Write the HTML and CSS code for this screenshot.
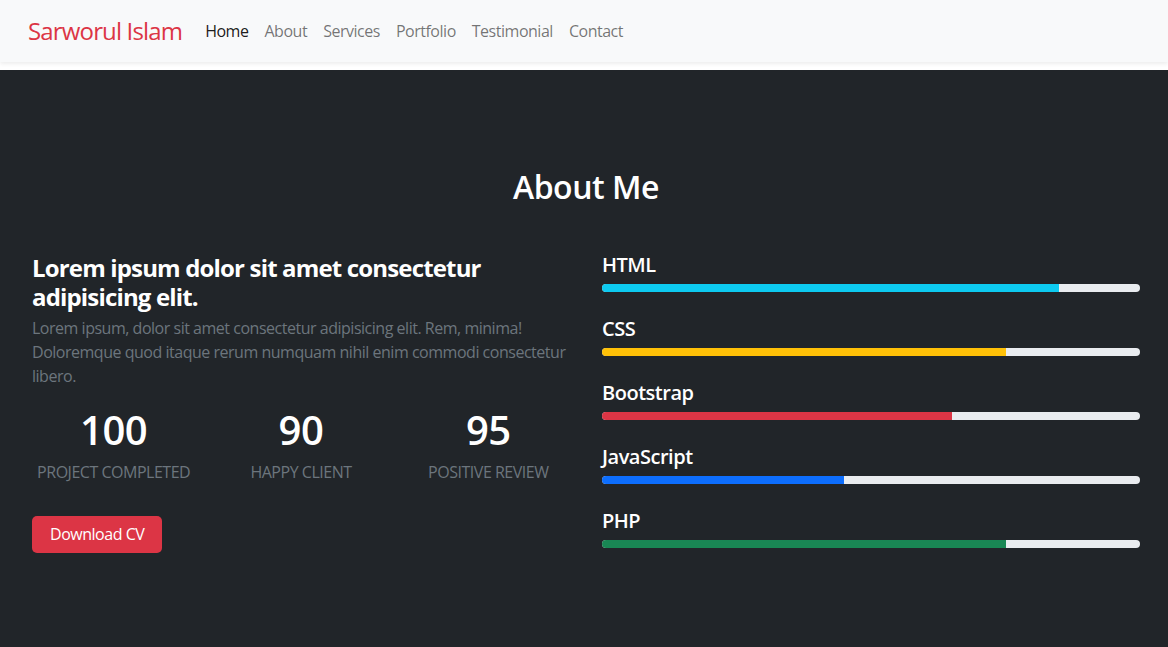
FILE: index.html
```html
<!DOCTYPE html>
<html lang="en">
<head>
<meta charset="utf-8">
<title>Sarworul Islam</title>
<link rel="stylesheet" href="styles.css">
</head>
<body>
<nav class="navbar">
  <a class="brand" href="#">Sarworul Islam</a>
  <ul class="nav">
    <li><a class="nav-link active" href="#">Home</a></li>
    <li><a class="nav-link" href="#">About</a></li>
    <li><a class="nav-link" href="#">Services</a></li>
    <li><a class="nav-link" href="#">Portfolio</a></li>
    <li><a class="nav-link" href="#">Testimonial</a></li>
    <li><a class="nav-link" href="#">Contact</a></li>
  </ul>
</nav>
<section class="about">
  <h2 class="section-title">About Me</h2>
  <div class="about-row">
    <div class="about-left">
      <h4 class="lead-title">Lorem ipsum dolor sit amet consectetur adipisicing elit.</h4>
      <p class="muted-text">Lorem ipsum, dolor sit amet consectetur adipisicing elit. Rem, minima! Doloremque quod itaque rerum numquam nihil enim commodi consectetur libero.</p>
      <div class="stats">
        <div class="stat"><div class="stat-num">100</div><div class="stat-label">Project Completed</div></div>
        <div class="stat"><div class="stat-num">90</div><div class="stat-label">Happy Client</div></div>
        <div class="stat"><div class="stat-num">95</div><div class="stat-label">Positive Review</div></div>
      </div>
      <a class="btn-cv" href="#">Download CV</a>
    </div>
    <div class="about-right">
      <div class="skill">
        <div class="skill-name">HTML</div>
        <div class="track"><div class="bar bar-info" style="width:85%"></div></div>
      </div>
      <div class="skill">
        <div class="skill-name">CSS</div>
        <div class="track"><div class="bar bar-warning" style="width:75%"></div></div>
      </div>
      <div class="skill">
        <div class="skill-name">Bootstrap</div>
        <div class="track"><div class="bar bar-danger" style="width:65%"></div></div>
      </div>
      <div class="skill">
        <div class="skill-name">JavaScript</div>
        <div class="track"><div class="bar bar-primary" style="width:45%"></div></div>
      </div>
      <div class="skill">
        <div class="skill-name">PHP</div>
        <div class="track"><div class="bar bar-success" style="width:75%"></div></div>
      </div>
    </div>
  </div>
</section>
</body>
</html>
```

FILE: styles.css
```css
* { box-sizing: border-box; }
html, body { margin: 0; padding: 0; }
body {
  font-family: "Open Sans", "Noto Sans", sans-serif;
  font-size: 16px;
  line-height: 1.5;
  letter-spacing: -0.03em;
  background: #fff;
  color: #212529;
}
a { text-decoration: none; }

.navbar {
  height: 62px;
  background: #f8f9fa;
  display: flex;
  align-items: center;
  padding: 0 28px;
  margin-bottom: 8px;
  box-shadow: 0 2px 4px rgba(0,0,0,.075);
  position: relative;
  z-index: 1;
}
.brand {
  color: #dc3545;
  font-size: 24px;
  letter-spacing: -0.035em;
  margin-right: 15px;
  line-height: 1;
}
.nav {
  display: flex;
  list-style: none;
  margin: 0;
  padding: 0;
}
.nav-link {
  display: block;
  padding: 8px 8px;
  color: rgba(0,0,0,.55);
}
.nav-link.active { color: rgba(0,0,0,.9); }

.about {
  background: #212529;
  color: #fff;
  padding: 98px 28px 80px 32px;
  min-height: 577px;
}
.section-title {
  text-align: center;
  font-size: 32px;
  font-weight: 600;
  line-height: 1.2;
  margin: 0 0 48px;
}
.about-row {
  display: grid;
  grid-template-columns: 1fr 1fr;
  column-gap: 32px;
}
.lead-title {
  font-size: 24px;
  font-weight: 700;
  letter-spacing: -0.035em;
  line-height: 1.2;
  margin: 0 0 4px;
}
.muted-text {
  color: #6c757d;
  margin: 0 0 18px;
}
.stats {
  display: grid;
  grid-template-columns: 1fr 1fr 1fr;
  margin: 0 -12px;
  text-align: center;
}
.stat-num {
  font-size: 40px;
  font-weight: 600;
  line-height: 1.2;
  margin-bottom: 6px;
}
.stat-label {
  color: #6c757d;
  text-transform: uppercase;
}
.btn-cv {
  display: inline-block;
  margin-top: 32px;
  background: #dc3545;
  color: #fff;
  padding: 6px 18px;
  border-radius: 5px;
  line-height: 25px;
}
.skill { margin-bottom: 26px; }
.skill-name {
  font-size: 20px;
  font-weight: 600;
  line-height: 22px;
  margin-bottom: 8px;
}
.track {
  height: 8px;
  background: #e9ecef;
  border-radius: 4px;
  overflow: hidden;
}
.bar { height: 100%; }
.bar-info { background: #0dcaf0; }
.bar-warning { background: #ffc107; }
.bar-danger { background: #dc3545; }
.bar-primary { background: #0d6efd; }
.bar-success { background: #198754; }
```
